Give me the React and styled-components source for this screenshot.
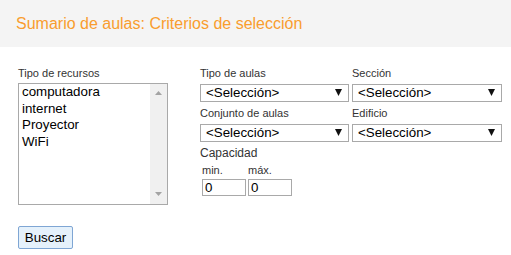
import React from 'react';
import styled, { createGlobalStyle } from 'styled-components';

const Global = createGlobalStyle`
  html, body { margin: 0; padding: 0; background: #fff; }
  body { font-family: Arial, "Liberation Sans", sans-serif; color: #222; }
`;

const Header = styled.header`
  height: 47px;
  box-sizing: border-box;
  background: #f4f4f4;
  padding: 14px 0 0 16px;
`;

const Title = styled.h1`
  margin: 0;
  font-size: 16px;
  line-height: 19px;
  font-weight: normal;
  color: #f99d2e;
`;

const Main = styled.main`
  padding: 19px 18px 0;
`;

const Criteria = styled.div`
  display: flex;
  align-items: flex-start;
  gap: 32px;
`;

const Field = styled.div`
  display: flex;
  flex-direction: column;
`;

const Label = styled.label`
  font-size: 11px;
  line-height: 14px;
  color: #333;
  margin-bottom: 3px;
`;

const ListBox = styled.div`
  width: 150px;
  height: 122px;
  box-sizing: border-box;
  border: 1px solid #a9a9a9;
  display: flex;
  background: #fff;
`;

const Options = styled.ul`
  flex: 1;
  margin: 0;
  padding: 0 0 0 3px;
  list-style: none;
`;

const Option = styled.li`
  font-size: 13.33px;
  line-height: 16.7px;
  color: #000;
`;

const ScrollTrack = styled.div`
  width: 17px;
  background: #f0f0f0;
  display: flex;
  flex-direction: column;
  justify-content: space-between;
  align-items: center;
  padding: 7px 0 8px;
  box-sizing: border-box;
`;

const RightCol = styled.div`
  display: flex;
  flex-direction: column;
`;

const SelectGrid = styled.div`
  display: grid;
  grid-template-columns: 149px 150px;
  column-gap: 3px;
  row-gap: 5px;
`;

const SelectWrap = styled.div`
  position: relative;
  height: 18px;
`;

const Select = styled.select`
  appearance: none;
  -webkit-appearance: none;
  width: 100%;
  height: 18px;
  box-sizing: border-box;
  margin: 0;
  border: 1px solid #a9a9a9;
  border-radius: 0;
  background: #fff;
  padding: 0 18px 0 5px;
  font-family: Arial, "Liberation Sans", sans-serif;
  font-size: 13.33px;
  line-height: 16px;
  color: #000;
  outline: none;
`;

const Caret = styled.svg`
  position: absolute;
  right: 7px;
  top: 6px;
  pointer-events: none;
`;

const CapacityTitle = styled.div`
  margin-top: 5px;
  font-size: 12px;
  line-height: 15px;
  color: #333;
`;

const RangeRow = styled.div`
  display: flex;
  gap: 2px;
  padding-left: 2px;
  margin-top: 3px;
`;

const RangeField = styled.div`
  display: flex;
  flex-direction: column;
  gap: 2px;
`;

const SmallLabel = styled.label`
  font-size: 11px;
  line-height: 13px;
  color: #333;
`;

const NumInput = styled.input`
  width: ${(p) => p.$w}px;
  height: 17px;
  box-sizing: border-box;
  margin: 0;
  border: 1px solid #a9a9a9;
  padding: 0 2px;
  font-family: Arial, "Liberation Sans", sans-serif;
  font-size: 13.33px;
  color: #000;
  outline: none;
`;

const Button = styled.button`
  margin-top: 21px;
  width: 55px;
  height: 23px;
  box-sizing: border-box;
  border: 1px solid #7fa6d4;
  border-radius: 2px;
  background: #e5f1fb;
  font-family: Arial, "Liberation Sans", sans-serif;
  font-size: 13.33px;
  color: #000;
  padding: 0;
`;

const Arrow = ({ up }) => (
  <svg width="7" height="4" viewBox="0 0 7 4">
    <polygon points={up ? '0,4 7,4 3.5,0' : '0,0 7,0 3.5,4'} fill="#a3a3a3" />
  </svg>
);

const Dropdown = ({ id }) => (
  <SelectWrap>
    <Select id={id} defaultValue="">
      <option value="">&lt;Selección&gt;</option>
    </Select>
    <Caret width="7" height="7" viewBox="0 0 7 7">
      <polygon points="0,0 7,0 3.5,7" fill="#111" />
    </Caret>
  </SelectWrap>
);

export default function App() {
  return (
    <>
      <Global />
      <Header>
        <Title>Sumario de aulas: Criterios de selección</Title>
      </Header>
      <Main>
        <Criteria>
          <Field>
            <Label>Tipo de recursos</Label>
            <ListBox role="listbox">
              <Options>
                <Option>computadora</Option>
                <Option>internet</Option>
                <Option>Proyector</Option>
                <Option>WiFi</Option>
              </Options>
              <ScrollTrack>
                <Arrow up />
                <Arrow />
              </ScrollTrack>
            </ListBox>
          </Field>
          <RightCol>
            <SelectGrid>
              <Field>
                <Label htmlFor="tipo">Tipo de aulas</Label>
                <Dropdown id="tipo" />
              </Field>
              <Field>
                <Label htmlFor="seccion">Sección</Label>
                <Dropdown id="seccion" />
              </Field>
              <Field>
                <Label htmlFor="conjunto">Conjunto de aulas</Label>
                <Dropdown id="conjunto" />
              </Field>
              <Field>
                <Label htmlFor="edificio">Edificio</Label>
                <Dropdown id="edificio" />
              </Field>
            </SelectGrid>
            <CapacityTitle>Capacidad</CapacityTitle>
            <RangeRow>
              <RangeField>
                <SmallLabel>min.</SmallLabel>
                <NumInput $w={44} defaultValue="0" />
              </RangeField>
              <RangeField>
                <SmallLabel>máx.</SmallLabel>
                <NumInput $w={44} defaultValue="0" />
              </RangeField>
            </RangeRow>
          </RightCol>
        </Criteria>
        <Button>Buscar</Button>
      </Main>
    </>
  );
}
